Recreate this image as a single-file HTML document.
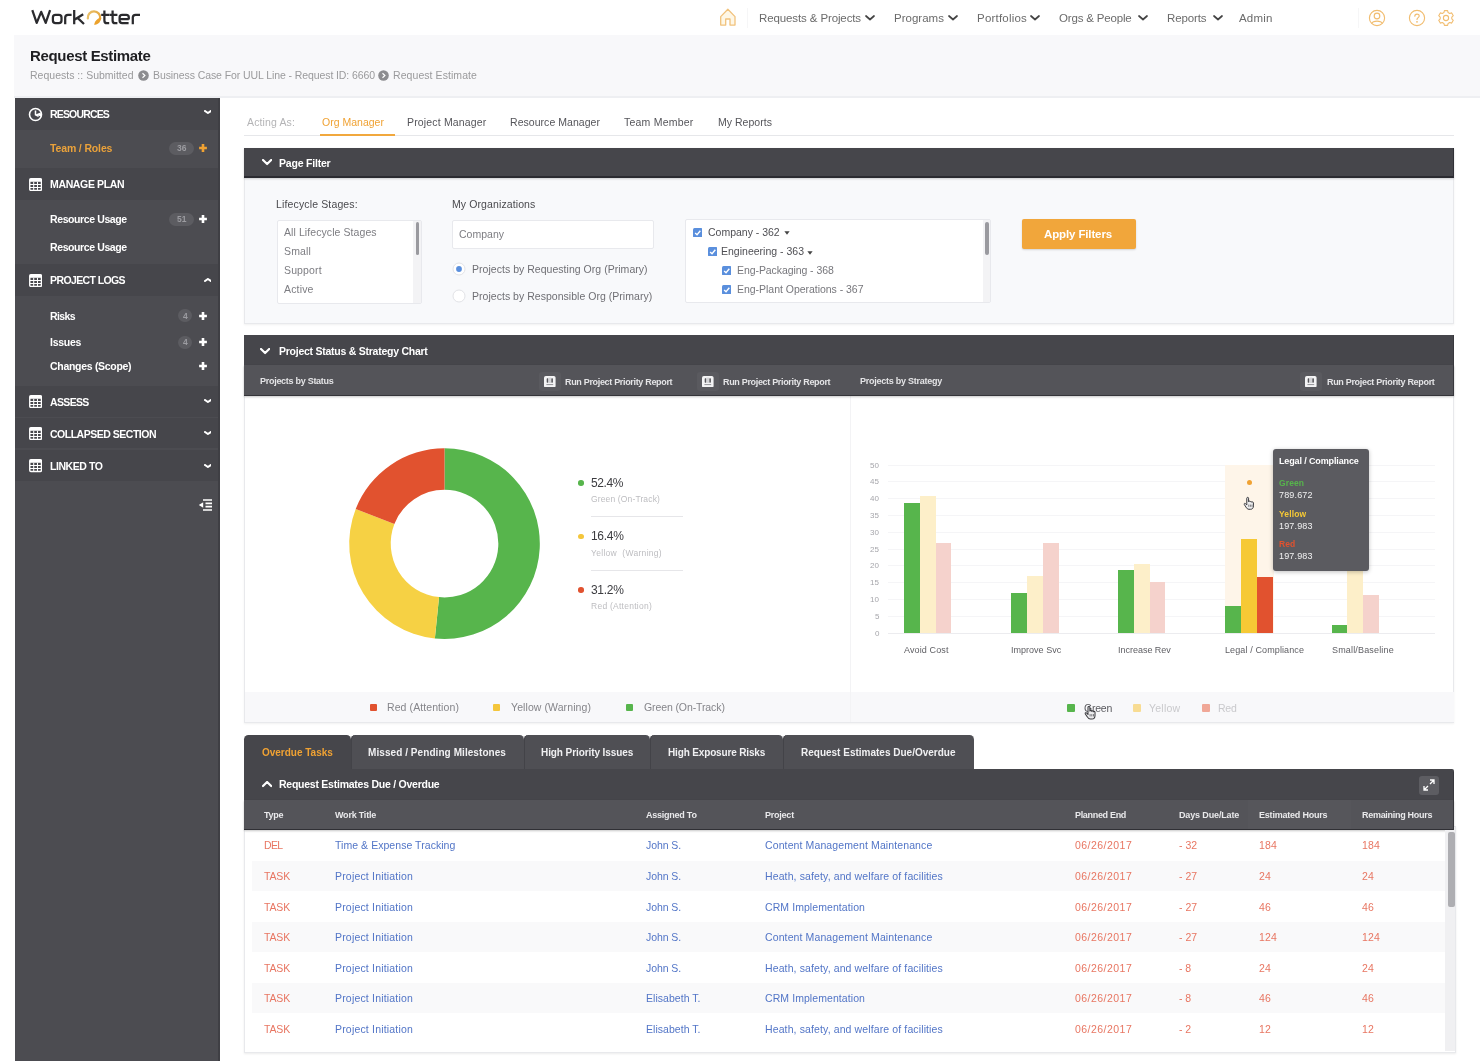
<!DOCTYPE html>
<html><head><meta charset="utf-8"><title>WorkOtter - Request Estimate</title>
<style>
html,body{margin:0;padding:0;background:#fff;}
body{width:1480px;height:1062px;overflow:hidden;position:relative;font-family:"Liberation Sans", sans-serif;}
#pg{position:absolute;left:0;top:0;width:1480px;height:1062px;overflow:hidden;background:#fff;}
#pg div,#pg span,#pg svg{position:absolute;}
#pg span{white-space:pre;line-height:16px;height:16px;-webkit-font-smoothing:antialiased;will-change:transform;}
</style></head><body><div id="pg">
<div style="left:14px;top:35px;width:1466px;height:62px;background:#f8f8fa;"></div>
<div style="left:14px;top:96.4px;width:1466px;height:1.2px;background:#eeeff2;"></div>
<span style="left:759px;top:10.0px;font-size:11.5px;color:#6b6b6b;letter-spacing:-0.115px;">Requests &amp; Projects</span>
<svg style="left:864.5px;top:15.3px" width="10" height="6.5" viewBox="0 0 10 6.5"><path d="M1,1 L5.0,4.5 L9,1" fill="none" stroke="#444" stroke-width="1.7" stroke-linecap="round" stroke-linejoin="round"/></svg>
<span style="left:894px;top:10.0px;font-size:11.5px;color:#6b6b6b;letter-spacing:0.018px;">Programs</span>
<svg style="left:947.5px;top:15.3px" width="10" height="6.5" viewBox="0 0 10 6.5"><path d="M1,1 L5.0,4.5 L9,1" fill="none" stroke="#444" stroke-width="1.7" stroke-linecap="round" stroke-linejoin="round"/></svg>
<span style="left:976.5px;top:10.0px;font-size:11.5px;color:#6b6b6b;letter-spacing:0.206px;">Portfolios</span>
<svg style="left:1030.0px;top:15.3px" width="10" height="6.5" viewBox="0 0 10 6.5"><path d="M1,1 L5.0,4.5 L9,1" fill="none" stroke="#444" stroke-width="1.7" stroke-linecap="round" stroke-linejoin="round"/></svg>
<span style="left:1059px;top:10.0px;font-size:11.5px;color:#6b6b6b;letter-spacing:-0.177px;">Orgs &amp; People</span>
<svg style="left:1137.5px;top:15.3px" width="10" height="6.5" viewBox="0 0 10 6.5"><path d="M1,1 L5.0,4.5 L9,1" fill="none" stroke="#444" stroke-width="1.7" stroke-linecap="round" stroke-linejoin="round"/></svg>
<span style="left:1167px;top:10.0px;font-size:11.5px;color:#6b6b6b;letter-spacing:-0.112px;">Reports</span>
<svg style="left:1212.5px;top:15.3px" width="10" height="6.5" viewBox="0 0 10 6.5"><path d="M1,1 L5.0,4.5 L9,1" fill="none" stroke="#444" stroke-width="1.7" stroke-linecap="round" stroke-linejoin="round"/></svg>
<span style="left:1238.5px;top:10.0px;font-size:11.5px;color:#6b6b6b;letter-spacing:0.178px;">Admin</span>
<div style="left:747px;top:8px;width:1px;height:20px;background:#f6f6f7;"></div>
<div style="left:1358px;top:8px;width:1px;height:20px;background:#f6f6f7;"></div>
<svg style="left:718px;top:8px" width="20" height="19" viewBox="0 0 20 19"><path d="M2.7,8.6 L9.85,1.3 L17,8.6 V17.1 H12 V11 H7.7 V17.1 H2.7 Z" fill="#fef7e6" stroke="#f1c27c" stroke-width="1.3" stroke-linejoin="round"/></svg>
<svg style="left:1368px;top:9px" width="18" height="18" viewBox="0 0 18 18"><circle cx="9" cy="9" r="7.6" fill="none" stroke="#f1bd70" stroke-width="1.15"/><circle cx="9" cy="7" r="2.8" fill="none" stroke="#f1bd70" stroke-width="1.15"/><path d="M3.8,14.3 C5,11.3 13,11.3 14.2,14.3" fill="none" stroke="#f1bd70" stroke-width="1.15"/></svg>
<svg style="left:1407.5px;top:9px" width="18" height="18" viewBox="0 0 18 18"><circle cx="9" cy="9" r="7.6" fill="none" stroke="#f1bd70" stroke-width="1.15"/><path d="M6.8,7.2 C6.8,4.4 11.2,4.4 11.2,7 C11.2,8.6 9,8.6 9,10.4" fill="none" stroke="#f1bd70" stroke-width="1.15" stroke-linecap="round"/><circle cx="9" cy="12.8" r="0.9" fill="#f1bd70"/></svg>
<svg style="left:1436.5px;top:9px" width="18" height="18" viewBox="0 0 18 18"><path d="M7.4,1.6 h3.2 l0.5,2 l1.6,0.9 l2,-0.6 l1.6,2.8 l-1.5,1.4 v1.8 l1.5,1.4 l-1.6,2.8 l-2,-0.6 l-1.6,0.9 l-0.5,2 h-3.2 l-0.5,-2 l-1.6,-0.9 l-2,0.6 l-1.6,-2.8 l1.5,-1.4 v-1.8 l-1.5,-1.4 l1.6,-2.8 l2,0.6 l1.6,-0.9 z" fill="none" stroke="#f1bd70" stroke-width="1.1" stroke-linejoin="round"/><circle cx="9" cy="9" r="2.6" fill="none" stroke="#f1bd70" stroke-width="1.1"/></svg>
<svg style="left:0;top:0" width="160" height="34" viewBox="0 0 160 34" fill="none" stroke-linejoin="round">
<g stroke="#2b2b2e" stroke-width="2.25" stroke-linecap="butt">
<path d="M32.3,10.2 L36.7,22.9 L41.2,11.8 L45.7,22.9 L50.1,10.2" stroke-linejoin="round"/>
<rect x="52.9" y="14.9" width="8.6" height="8.3" rx="2.6"/>
<path d="M65.2,24.2 V17.6 Q65.2,14.9 68,14.9 H71.6"/>
<path d="M74.2,10 V24.2 M74.4,19.8 L83.2,14.2 M77.6,17.9 L84,24"/>
<path d="M104.4,10.4 V20.4 Q104.4,23.2 107,23.2 H109.2 M101.2,14.9 H109.2"/>
<path d="M112.6,10.4 V20.4 Q112.6,23.2 115.2,23.2 H117.4 M109.4,14.9 H117.4"/>
<path d="M128.8,19.1 H119.6 M128.8,19.6 V17.5 Q128.8,14.9 126.2,14.9 H122.2 Q119.6,14.9 119.6,17.5 V20.6 Q119.6,23.2 122.2,23.2 H128.6"/>
<path d="M132.8,24.2 V17.6 Q132.8,14.9 135.6,14.9 H140"/>
</g>
<defs><linearGradient id="lg1" x1="0" y1="0" x2="1" y2="0"><stop offset="0" stop-color="#e9c06a"/><stop offset="1" stop-color="#e6aa45"/></linearGradient></defs>
<path d="M87.85,18.36 A6.2,6.2 0 1 1 100.14,18.46" stroke="url(#lg1)" stroke-width="2.3" stroke-linecap="round"/>
<path d="M101.3,17.7 A7.3,7.3 0 0 1 94.3,24.9 C94.2,22.5 95.6,20.2 98.3,18.5 C99.4,17.8 100.4,17.6 101.3,17.7 Z" fill="#eca22c"/>
</svg>
<span style="left:30px;top:48.0px;font-size:15px;color:#1f1f22;font-weight:700;letter-spacing:-0.336px;">Request Estimate</span>
<span style="left:30px;top:67.0px;font-size:10.5px;color:#9a9a9c;letter-spacing:0.009px;">Requests :: Submitted</span>
<svg style="left:138px;top:70px" width="11" height="11" viewBox="0 0 11 11"><circle cx="5.5" cy="5.5" r="5.3" fill="#8d8d90"/><path d="M4.5,3.2 L6.9,5.5 L4.5,7.8" fill="none" stroke="#fff" stroke-width="1.2"/></svg>
<span style="left:152.5px;top:67.0px;font-size:10.5px;color:#9a9a9c;letter-spacing:-0.090px;">Business Case For UUL Line - Request ID: 6660</span>
<svg style="left:378px;top:70px" width="11" height="11" viewBox="0 0 11 11"><circle cx="5.5" cy="5.5" r="5.3" fill="#8d8d90"/><path d="M4.5,3.2 L6.9,5.5 L4.5,7.8" fill="none" stroke="#fff" stroke-width="1.2"/></svg>
<span style="left:393px;top:67.0px;font-size:10.5px;color:#9a9a9c;letter-spacing:0.070px;">Request Estimate</span>
<div style="left:14.6px;top:97.5px;width:205.4px;height:963.0px;background:#4c4c51;"></div>
<div style="left:14.6px;top:97.5px;width:205.4px;height:32.4px;background:#46464b;"></div>
<span style="left:49.6px;top:106.0px;font-size:10.5px;color:#ffffff;font-weight:700;letter-spacing:-0.835px;">RESOURCES</span>
<svg style="left:203.7px;top:110.10000000000001px" width="7.8" height="5" viewBox="0 0 7.8 5"><path d="M1,1 L3.9,3 L6.8,1" fill="none" stroke="#fff" stroke-width="2.1" stroke-linecap="round" stroke-linejoin="round"/></svg>
<div style="left:14.6px;top:97.5px;width:205.4px;height:1.5px;background:#46464b;"></div>
<svg style="left:28px;top:107px" width="15" height="15" viewBox="0 0 15 15"><circle cx="7.5" cy="7.5" r="6" fill="none" stroke="#fff" stroke-width="1.6"/><path d="M7.5,3.6 V7.7 L10.6,9.4" fill="none" stroke="#fff" stroke-width="1.5"/><path d="M7.5,7.5 L12.5,5.5 A5.6,5.6 0 0 1 12.8,9.6 Z" fill="#fff"/></svg>
<span style="left:50.4px;top:139.6px;font-size:10.5px;color:#eba23a;font-weight:700;letter-spacing:-0.142px;">Team / Roles</span>
<div style="left:169px;top:141.5px;width:24.8px;height:13.0px;background:#5c5c61;border-radius:7px;"></div>
<span style="left:176.6px;top:140.0px;font-size:8.5px;color:#9c9ca1;font-weight:700;letter-spacing:0.066px;">36</span>
<svg style="left:198.4px;top:143px" width="10" height="10" viewBox="0 0 10 10"><path d="M5,1.1 V8.9 M1.1,5 H8.9" stroke="#f0a233" stroke-width="2.6"/></svg>
<div style="left:14.6px;top:167.6px;width:205.4px;height:32.3px;background:#46464b;"></div>
<svg style="left:28.5px;top:177.55px" width="13.2" height="13.2" viewBox="0 0 14 14"><rect x="0.8" y="0.8" width="12.4" height="12.4" rx="1.2" fill="none" stroke="#fff" stroke-width="1.5"/><rect x="0.8" y="0.8" width="12.4" height="3.2" fill="#fff"/><path d="M1,7 H13 M1,10 H13 M5,4 V13 M9,4 V13" stroke="#fff" stroke-width="1.1"/></svg>
<span style="left:49.6px;top:176.05px;font-size:10.5px;color:#ffffff;font-weight:700;letter-spacing:-0.352px;">MANAGE PLAN</span>
<span style="left:50.4px;top:210.7px;font-size:10.5px;color:#ffffff;font-weight:700;letter-spacing:-0.393px;">Resource Usage</span>
<div style="left:169px;top:212.5px;width:24.8px;height:13.0px;background:#5c5c61;border-radius:7px;"></div>
<span style="left:176.6px;top:211.0px;font-size:8.5px;color:#9c9ca1;font-weight:700;letter-spacing:0.066px;">51</span>
<svg style="left:198.4px;top:214px" width="10" height="10" viewBox="0 0 10 10"><path d="M5,1.1 V8.9 M1.1,5 H8.9" stroke="#fff" stroke-width="2.6"/></svg>
<span style="left:50.4px;top:239.2px;font-size:10.5px;color:#ffffff;font-weight:700;letter-spacing:-0.393px;">Resource Usage</span>
<div style="left:14.6px;top:264.2px;width:205.4px;height:31.8px;background:#46464b;"></div>
<svg style="left:28.5px;top:273.90000000000003px" width="13.2" height="13.2" viewBox="0 0 14 14"><rect x="0.8" y="0.8" width="12.4" height="12.4" rx="1.2" fill="none" stroke="#fff" stroke-width="1.5"/><rect x="0.8" y="0.8" width="12.4" height="3.2" fill="#fff"/><path d="M1,7 H13 M1,10 H13 M5,4 V13 M9,4 V13" stroke="#fff" stroke-width="1.1"/></svg>
<span style="left:49.6px;top:272.4px;font-size:10.5px;color:#ffffff;font-weight:700;letter-spacing:-0.605px;">PROJECT LOGS</span>
<svg style="left:203.7px;top:277.5px" width="7.8" height="5" viewBox="0 0 7.8 5"><path d="M1,3 L3.9,1 L6.8,3" fill="none" stroke="#fff" stroke-width="2.1" stroke-linecap="round" stroke-linejoin="round"/></svg>
<span style="left:50.4px;top:307.8px;font-size:10.5px;color:#ffffff;font-weight:700;letter-spacing:-0.586px;">Risks</span>
<div style="left:178px;top:309.3px;width:14px;height:13.0px;background:#5c5c61;border-radius:7px;"></div>
<span style="left:182.6px;top:307.8px;font-size:8.5px;color:#9c9ca1;font-weight:700;">4</span>
<svg style="left:198.4px;top:310.8px" width="10" height="10" viewBox="0 0 10 10"><path d="M5,1.1 V8.9 M1.1,5 H8.9" stroke="#fff" stroke-width="2.6"/></svg>
<span style="left:50.4px;top:334.3px;font-size:10.5px;color:#ffffff;font-weight:700;letter-spacing:-0.267px;">Issues</span>
<div style="left:178px;top:335.8px;width:14px;height:13.0px;background:#5c5c61;border-radius:7px;"></div>
<span style="left:182.6px;top:334.3px;font-size:8.5px;color:#9c9ca1;font-weight:700;">4</span>
<svg style="left:198.4px;top:337.3px" width="10" height="10" viewBox="0 0 10 10"><path d="M5,1.1 V8.9 M1.1,5 H8.9" stroke="#fff" stroke-width="2.6"/></svg>
<span style="left:50.4px;top:357.6px;font-size:10.5px;color:#ffffff;font-weight:700;letter-spacing:-0.298px;">Changes (Scope)</span>
<svg style="left:198.4px;top:361px" width="10" height="10" viewBox="0 0 10 10"><path d="M5,1.1 V8.9 M1.1,5 H8.9" stroke="#fff" stroke-width="2.6"/></svg>
<div style="left:14.6px;top:386px;width:205.4px;height:30.5px;background:#46464b;"></div>
<svg style="left:28.5px;top:395.05px" width="13.2" height="13.2" viewBox="0 0 14 14"><rect x="0.8" y="0.8" width="12.4" height="12.4" rx="1.2" fill="none" stroke="#fff" stroke-width="1.5"/><rect x="0.8" y="0.8" width="12.4" height="3.2" fill="#fff"/><path d="M1,7 H13 M1,10 H13 M5,4 V13 M9,4 V13" stroke="#fff" stroke-width="1.1"/></svg>
<span style="left:49.6px;top:393.55px;font-size:10.5px;color:#ffffff;font-weight:700;letter-spacing:-0.652px;">ASSESS</span>
<svg style="left:203.7px;top:399.25px" width="7.8" height="5" viewBox="0 0 7.8 5"><path d="M1,1 L3.9,3 L6.8,1" fill="none" stroke="#fff" stroke-width="2.1" stroke-linecap="round" stroke-linejoin="round"/></svg>
<div style="left:14.6px;top:418.3px;width:205.4px;height:30.0px;background:#46464b;"></div>
<svg style="left:28.5px;top:427.1px" width="13.2" height="13.2" viewBox="0 0 14 14"><rect x="0.8" y="0.8" width="12.4" height="12.4" rx="1.2" fill="none" stroke="#fff" stroke-width="1.5"/><rect x="0.8" y="0.8" width="12.4" height="3.2" fill="#fff"/><path d="M1,7 H13 M1,10 H13 M5,4 V13 M9,4 V13" stroke="#fff" stroke-width="1.1"/></svg>
<span style="left:49.6px;top:425.6px;font-size:10.5px;color:#ffffff;font-weight:700;letter-spacing:-0.491px;">COLLAPSED SECTION</span>
<svg style="left:203.7px;top:431.3px" width="7.8" height="5" viewBox="0 0 7.8 5"><path d="M1,1 L3.9,3 L6.8,1" fill="none" stroke="#fff" stroke-width="2.1" stroke-linecap="round" stroke-linejoin="round"/></svg>
<div style="left:14.6px;top:450.3px;width:205.4px;height:30.7px;background:#46464b;"></div>
<svg style="left:28.5px;top:459.45px" width="13.2" height="13.2" viewBox="0 0 14 14"><rect x="0.8" y="0.8" width="12.4" height="12.4" rx="1.2" fill="none" stroke="#fff" stroke-width="1.5"/><rect x="0.8" y="0.8" width="12.4" height="3.2" fill="#fff"/><path d="M1,7 H13 M1,10 H13 M5,4 V13 M9,4 V13" stroke="#fff" stroke-width="1.1"/></svg>
<span style="left:49.6px;top:457.95px;font-size:10.5px;color:#ffffff;font-weight:700;letter-spacing:-0.445px;">LINKED TO</span>
<svg style="left:203.7px;top:463.65px" width="7.8" height="5" viewBox="0 0 7.8 5"><path d="M1,1 L3.9,3 L6.8,1" fill="none" stroke="#fff" stroke-width="2.1" stroke-linecap="round" stroke-linejoin="round"/></svg>
<div style="left:218.2px;top:97.5px;width:1.8px;height:963.0px;background:#3f3f44;"></div>
<svg style="left:198px;top:498px" width="15" height="14" viewBox="0 0 15 14"><path d="M5,2 H14 M7.5,5.3 H14 M7.5,8.6 H14 M5,12 H14" stroke="#fff" stroke-width="1.7"/><path d="M0.8,7 L5.2,4.2 V9.8 Z" fill="#fff"/></svg>
<div style="left:244px;top:135px;width:1210px;height:1px;background:#e6e7ea;"></div>
<span style="left:247px;top:114.0px;font-size:10.5px;color:#b4b4b6;letter-spacing:0.130px;">Acting As:</span>
<span style="left:321.5px;top:114.0px;font-size:10.5px;color:#f0a233;letter-spacing:0.011px;">Org Manager</span>
<div style="left:320px;top:133.5px;width:75px;height:2.3px;background:#f1a83e;"></div>
<span style="left:407px;top:114.0px;font-size:10.5px;color:#55555a;letter-spacing:0.164px;">Project Manager</span>
<span style="left:509.5px;top:114.0px;font-size:10.5px;color:#55555a;letter-spacing:0.044px;">Resource Manager</span>
<span style="left:624px;top:114.0px;font-size:10.5px;color:#55555a;letter-spacing:0.217px;">Team Member</span>
<span style="left:718px;top:114.0px;font-size:10.5px;color:#55555a;letter-spacing:0.031px;">My Reports</span>
<div style="left:244px;top:177px;width:1210px;height:147px;background:#f8f9fb;box-sizing:border-box;border:1px solid #e8e9ec;box-shadow:0 1px 2px rgba(0,0,0,0.06);"></div>
<div style="left:244px;top:147.6px;width:1210px;height:30.2px;background:#46464b;box-shadow:0 1px 2px rgba(0,0,0,0.18);"></div>
<svg style="left:261.8px;top:159.1px" width="10.2" height="7" viewBox="0 0 10.2 7"><path d="M1,1 L5.1,5 L9.2,1" fill="none" stroke="#fff" stroke-width="2.2" stroke-linecap="round" stroke-linejoin="round"/></svg>
<div style="left:244px;top:176.2px;width:1210px;height:1.6px;background:#2b2b31;"></div>
<div style="left:1452.6px;top:147.6px;width:1.4px;height:30.2px;background:#303036;"></div>
<span style="left:278.5px;top:155.0px;font-size:10.5px;color:#ffffff;font-weight:700;letter-spacing:-0.199px;">Page Filter</span>
<span style="left:276px;top:196.0px;font-size:10.5px;color:#4a4a4e;letter-spacing:0.142px;">Lifecycle Stages:</span>
<span style="left:451.6px;top:195.7px;font-size:10.5px;color:#4a4a4e;letter-spacing:0.106px;">My Organizations</span>
<div style="left:277px;top:219.6px;width:144.5px;height:84.0px;background:#fff;box-sizing:border-box;border:1px solid #e8e9ed;border-radius:2px;"></div>
<div style="left:412.5px;top:220.6px;width:8.0px;height:82.0px;background:#f3f3f5;"></div>
<div style="left:415.6px;top:222px;width:3.6px;height:33.4px;background:#9a9a9f;border-radius:2px;"></div>
<span style="left:283.6px;top:224.0px;font-size:10.5px;color:#7d7d82;letter-spacing:0.083px;">All Lifecycle Stages</span>
<span style="left:283.6px;top:243.2px;font-size:10.5px;color:#7d7d82;letter-spacing:0.147px;">Small</span>
<span style="left:283.6px;top:262.4px;font-size:10.5px;color:#7d7d82;letter-spacing:0.131px;">Support</span>
<span style="left:283.6px;top:281.2px;font-size:10.5px;color:#7d7d82;letter-spacing:0.168px;">Active</span>
<div style="left:451.6px;top:219.6px;width:202.8px;height:29.6px;background:#fff;box-sizing:border-box;border:1px solid #e8e9ed;border-radius:2px;"></div>
<span style="left:459.2px;top:226.4px;font-size:10.5px;color:#7d7d82;letter-spacing:0.007px;">Company</span>
<svg style="left:452px;top:261.8px" width="14" height="14" viewBox="0 0 14 14"><circle cx="7" cy="7" r="6" fill="#fff" stroke="#e2e3e7" stroke-width="1"/><circle cx="7" cy="7" r="2.9" fill="#5a8fdd"/></svg>
<svg style="left:452px;top:288.6px" width="14" height="14" viewBox="0 0 14 14"><circle cx="7" cy="7" r="6" fill="#fff" stroke="#e2e3e7" stroke-width="1"/></svg>
<span style="left:472.2px;top:261.0px;font-size:10.5px;color:#6f6f74;letter-spacing:0.031px;">Projects by Requesting Org (Primary)</span>
<span style="left:472.2px;top:287.6px;font-size:10.5px;color:#6f6f74;letter-spacing:0.029px;">Projects by Responsible Org (Primary)</span>
<div style="left:685.4px;top:219.2px;width:305.8px;height:84.1px;background:#fff;box-sizing:border-box;border:1px solid #e8e9ed;border-radius:2px;"></div>
<div style="left:983.4px;top:220.2px;width:6.8px;height:82.1px;background:#f3f3f5;"></div>
<div style="left:985.2px;top:222px;width:4.0px;height:33.4px;background:#9a9a9f;border-radius:2px;"></div>
<svg style="left:693px;top:227.6px" width="9.4" height="9.4" viewBox="0 0 10 10"><rect x="0" y="0" width="10" height="10" rx="1.6" fill="#5a8fdd"/><path d="M2.3,5.2 L4.3,7.2 L7.8,3" fill="none" stroke="#fff" stroke-width="1.5"/></svg>
<span style="left:707.6px;top:224.2px;font-size:10.5px;color:#4f4f54;letter-spacing:-0.007px;">Company - 362</span>
<svg style="left:783.6px;top:231.3px" width="6" height="4" viewBox="0 0 6 4"><path d="M0.4,0.3 H5.6 L3,3.7 Z" fill="#444"/></svg>
<svg style="left:707.6px;top:246.8px" width="9.4" height="9.4" viewBox="0 0 10 10"><rect x="0" y="0" width="10" height="10" rx="1.6" fill="#5a8fdd"/><path d="M2.3,5.2 L4.3,7.2 L7.8,3" fill="none" stroke="#fff" stroke-width="1.5"/></svg>
<span style="left:721px;top:243.4px;font-size:10.5px;color:#4f4f54;letter-spacing:0.006px;">Engineering - 363</span>
<svg style="left:807.4px;top:250.5px" width="6" height="4" viewBox="0 0 6 4"><path d="M0.4,0.3 H5.6 L3,3.7 Z" fill="#444"/></svg>
<svg style="left:721.8px;top:265.79999999999995px" width="9.4" height="9.4" viewBox="0 0 10 10"><rect x="0" y="0" width="10" height="10" rx="1.6" fill="#5a8fdd"/><path d="M2.3,5.2 L4.3,7.2 L7.8,3" fill="none" stroke="#fff" stroke-width="1.5"/></svg>
<span style="left:736.5px;top:262.4px;font-size:10.5px;color:#77777c;letter-spacing:-0.073px;">Eng-Packaging - 368</span>
<svg style="left:721.8px;top:284.79999999999995px" width="9.4" height="9.4" viewBox="0 0 10 10"><rect x="0" y="0" width="10" height="10" rx="1.6" fill="#5a8fdd"/><path d="M2.3,5.2 L4.3,7.2 L7.8,3" fill="none" stroke="#fff" stroke-width="1.5"/></svg>
<span style="left:736.5px;top:281.2px;font-size:10.5px;color:#77777c;letter-spacing:-0.029px;">Eng-Plant Operations - 367</span>
<div style="left:1021.5px;top:219.2px;width:114.0px;height:30.2px;background:#f1a63b;border-radius:2px;box-shadow:0 1px 2px rgba(0,0,0,0.15);"></div>
<span style="left:1044px;top:226.0px;font-size:11.5px;color:#ffffff;font-weight:700;letter-spacing:-0.127px;">Apply Filters</span>
<div style="left:244px;top:365px;width:1210px;height:358px;background:#fff;box-sizing:border-box;border:1px solid #e8e9ec;box-shadow:0 1px 2px rgba(0,0,0,0.06);"></div>
<div style="left:245px;top:692.3px;width:1208.5px;height:29.7px;background:#f8f8fa;"></div>
<div style="left:849.5px;top:396px;width:1.0px;height:326px;background:#f3f3f5;"></div>
<div style="left:244px;top:335.4px;width:1210px;height:30.6px;background:#46464b;"></div>
<div style="left:244px;top:365.2px;width:1210px;height:30.6px;background:#545459;box-shadow:0 1px 2px rgba(0,0,0,0.22);"></div>
<div style="left:244px;top:394.8px;width:1210px;height:1.2px;background:#35353a;"></div>
<div style="left:1452.8px;top:335.4px;width:1.2px;height:60.6px;background:#38383d;"></div>
<svg style="left:260.2px;top:347.8px" width="10.2" height="7" viewBox="0 0 10.2 7"><path d="M1,1 L5.1,5 L9.2,1" fill="none" stroke="#fff" stroke-width="2.2" stroke-linecap="round" stroke-linejoin="round"/></svg>
<span style="left:279.4px;top:343.2px;font-size:10.5px;color:#ffffff;font-weight:700;letter-spacing:-0.251px;">Project Status &amp; Strategy Chart</span>
<span style="left:260px;top:373.0px;font-size:9px;color:#e4e4e6;font-weight:700;letter-spacing:-0.280px;">Projects by Status</span>
<span style="left:860px;top:373.0px;font-size:9px;color:#e4e4e6;font-weight:700;letter-spacing:-0.252px;">Projects by Strategy</span>
<div style="left:539px;top:372.0px;width:21.5px;height:19.0px;background:#5a5a5f;border-radius:3px;"></div>
<svg style="left:544px;top:375.6px" width="11.6" height="11.6" viewBox="0 0 11.6 11.6"><rect x="0" y="0" width="11.6" height="11.6" rx="1.8" fill="#f4f4f5"/><rect x="2.7" y="2.3" width="1.7" height="4.4" rx="0.6" fill="#55555a"/><rect x="7.2" y="2.3" width="1.7" height="4.4" rx="0.6" fill="#55555a"/><rect x="4.4" y="1.6" width="2.8" height="5.4" fill="#d4d4d7"/><rect x="2.4" y="8" width="6.8" height="1.1" fill="#9a9a9f"/></svg>
<span style="left:564.7px;top:373.8px;font-size:9px;color:#e4e4e6;font-weight:700;letter-spacing:-0.323px;">Run Project Priority Report</span>
<div style="left:697px;top:372.0px;width:21.5px;height:19.0px;background:#5a5a5f;border-radius:3px;"></div>
<svg style="left:702px;top:375.6px" width="11.6" height="11.6" viewBox="0 0 11.6 11.6"><rect x="0" y="0" width="11.6" height="11.6" rx="1.8" fill="#f4f4f5"/><rect x="2.7" y="2.3" width="1.7" height="4.4" rx="0.6" fill="#55555a"/><rect x="7.2" y="2.3" width="1.7" height="4.4" rx="0.6" fill="#55555a"/><rect x="4.4" y="1.6" width="2.8" height="5.4" fill="#d4d4d7"/><rect x="2.4" y="8" width="6.8" height="1.1" fill="#9a9a9f"/></svg>
<span style="left:722.7px;top:373.8px;font-size:9px;color:#e4e4e6;font-weight:700;letter-spacing:-0.323px;">Run Project Priority Report</span>
<div style="left:1300px;top:372.0px;width:21.5px;height:19.0px;background:#5a5a5f;border-radius:3px;"></div>
<svg style="left:1305px;top:375.6px" width="11.6" height="11.6" viewBox="0 0 11.6 11.6"><rect x="0" y="0" width="11.6" height="11.6" rx="1.8" fill="#f4f4f5"/><rect x="2.7" y="2.3" width="1.7" height="4.4" rx="0.6" fill="#55555a"/><rect x="7.2" y="2.3" width="1.7" height="4.4" rx="0.6" fill="#55555a"/><rect x="4.4" y="1.6" width="2.8" height="5.4" fill="#d4d4d7"/><rect x="2.4" y="8" width="6.8" height="1.1" fill="#9a9a9f"/></svg>
<span style="left:1326.5px;top:373.8px;font-size:9px;color:#e4e4e6;font-weight:700;letter-spacing:-0.315px;">Run Project Priority Report</span>
<svg style="left:0;top:0" width="1480" height="1062" viewBox="0 0 1480 1062"><path d="M444.50,448.30 A95.3,95.3 0 1 1 434.87,638.41 L439.06,597.12 A53.8,53.8 0 1 0 444.50,489.80 Z" fill="#57b54c"/><path d="M434.87,638.41 A95.3,95.3 0 0 1 355.71,508.98 L394.38,524.06 A53.8,53.8 0 0 0 439.06,597.12 Z" fill="#f6d144"/><path d="M355.71,508.98 A95.3,95.3 0 0 1 444.50,448.30 L444.50,489.80 A53.8,53.8 0 0 0 394.38,524.06 Z" fill="#e1522f"/></svg>
<div style="left:578.2px;top:480.2px;width:5.6px;height:5.6px;background:#57b54c;border-radius:50%;"></div>
<span style="left:591px;top:474.8px;font-size:12px;color:#3c3c40;letter-spacing:-0.406px;">52.4%</span>
<span style="left:591px;top:490.8px;font-size:8.5px;color:#bdbdc0;letter-spacing:0.140px;">Green (On-Track)</span>
<div style="left:591px;top:516.4px;width:92px;height:1.0px;background:#e6e6e9;"></div>
<div style="left:578.2px;top:533.6px;width:5.6px;height:5.6px;background:#f4c63c;border-radius:50%;"></div>
<span style="left:591px;top:528.2px;font-size:12px;color:#3c3c40;letter-spacing:-0.306px;">16.4%</span>
<span style="left:591px;top:544.8px;font-size:8.5px;color:#bdbdc0;letter-spacing:0.295px;">Yellow  (Warning)</span>
<div style="left:591px;top:569.6px;width:92px;height:1.0px;background:#e6e6e9;"></div>
<div style="left:578.2px;top:587.2px;width:5.6px;height:5.6px;background:#e1522f;border-radius:50%;"></div>
<span style="left:591px;top:581.8px;font-size:12px;color:#3c3c40;letter-spacing:-0.306px;">31.2%</span>
<span style="left:591px;top:598.0px;font-size:8.5px;color:#bdbdc0;letter-spacing:0.255px;">Red (Attention)</span>
<div style="left:370px;top:704.3px;width:6.8px;height:6.8px;background:#e1522f;border-radius:1px;"></div>
<span style="left:387px;top:699.2px;font-size:10.5px;color:#85858a;letter-spacing:0.092px;">Red (Attention)</span>
<div style="left:493px;top:704.3px;width:6.8px;height:6.8px;background:#f4c63c;border-radius:1px;"></div>
<span style="left:511px;top:699.2px;font-size:10.5px;color:#85858a;letter-spacing:0.088px;">Yellow (Warning)</span>
<div style="left:626px;top:704.3px;width:6.8px;height:6.8px;background:#57b54c;border-radius:1px;"></div>
<span style="left:644px;top:699.2px;font-size:10.5px;color:#85858a;letter-spacing:-0.104px;">Green (On-Track)</span>
<div style="left:887.6px;top:632.5px;width:547.0px;height:1.0px;background:#ececef;"></div>
<span style="left:874.6px;top:625.5px;font-size:8px;color:#a6a6ab;">0</span>
<div style="left:887.6px;top:615.7px;width:547.0px;height:1.0px;background:#f5f5f7;"></div>
<span style="left:874.6px;top:608.7px;font-size:8px;color:#a6a6ab;">5</span>
<div style="left:887.6px;top:598.9px;width:547.0px;height:1.0px;background:#f5f5f7;"></div>
<span style="left:870.0px;top:591.9px;font-size:8px;color:#a6a6ab;letter-spacing:0.147px;">10</span>
<div style="left:887.6px;top:582.1px;width:547.0px;height:1.0px;background:#f5f5f7;"></div>
<span style="left:870.0px;top:575.1px;font-size:8px;color:#a6a6ab;letter-spacing:0.147px;">15</span>
<div style="left:887.6px;top:565.3px;width:547.0px;height:1.0px;background:#f5f5f7;"></div>
<span style="left:870.0px;top:558.3px;font-size:8px;color:#a6a6ab;letter-spacing:0.147px;">20</span>
<div style="left:887.6px;top:548.5px;width:547.0px;height:1.0px;background:#f5f5f7;"></div>
<span style="left:870.0px;top:541.5px;font-size:8px;color:#a6a6ab;letter-spacing:0.147px;">25</span>
<div style="left:887.6px;top:531.7px;width:547.0px;height:1.0px;background:#f5f5f7;"></div>
<span style="left:870.0px;top:524.7px;font-size:8px;color:#a6a6ab;letter-spacing:0.147px;">30</span>
<div style="left:887.6px;top:514.9px;width:547.0px;height:1.0px;background:#f5f5f7;"></div>
<span style="left:870.0px;top:507.9px;font-size:8px;color:#a6a6ab;letter-spacing:0.147px;">35</span>
<div style="left:887.6px;top:498.1px;width:547.0px;height:1.0px;background:#f5f5f7;"></div>
<span style="left:870.0px;top:491.1px;font-size:8px;color:#a6a6ab;letter-spacing:0.147px;">40</span>
<div style="left:887.6px;top:481.3px;width:547.0px;height:1.0px;background:#f5f5f7;"></div>
<span style="left:870.0px;top:474.3px;font-size:8px;color:#a6a6ab;letter-spacing:0.147px;">45</span>
<div style="left:887.6px;top:464.5px;width:547.0px;height:1.0px;background:#f5f5f7;"></div>
<span style="left:870.0px;top:457.5px;font-size:8px;color:#a6a6ab;letter-spacing:0.147px;">50</span>
<div style="left:1225px;top:465px;width:48.7px;height:168px;background:#fef5e9;"></div>
<div style="left:904px;top:502.632px;width:15.7px;height:130.37px;background:#57b54c;"></div>
<div style="left:919.7px;top:496.248px;width:15.9px;height:136.75px;background:#fdefc9;"></div>
<div style="left:935.6px;top:543.288px;width:15.6px;height:89.71px;background:#f5d2cc;"></div>
<div style="left:1011.2px;top:593.352px;width:15.6px;height:39.65px;background:#57b54c;"></div>
<div style="left:1026.8px;top:575.88px;width:16.0px;height:57.12px;background:#fdefc9;"></div>
<div style="left:1042.8px;top:543.288px;width:16.0px;height:89.71px;background:#f5d2cc;"></div>
<div style="left:1117.6px;top:569.832px;width:16.0px;height:63.17px;background:#57b54c;"></div>
<div style="left:1133.6px;top:563.784px;width:16.0px;height:69.22px;background:#fdefc9;"></div>
<div style="left:1149.6px;top:582.264px;width:15.6px;height:50.74px;background:#f5d2cc;"></div>
<div style="left:1225.3px;top:605.784px;width:16.0px;height:27.22px;background:#57b54c;"></div>
<div style="left:1241.3px;top:538.92px;width:16.0px;height:94.08px;background:#f6c935;"></div>
<div style="left:1257.3px;top:577.224px;width:15.3px;height:55.78px;background:#e1522f;"></div>
<div style="left:1331.7px;top:624.936px;width:15.5px;height:8.06px;background:#57b54c;"></div>
<div style="left:1347.2px;top:532.2px;width:16.0px;height:100.8px;background:#fdefc9;"></div>
<div style="left:1363.2px;top:595.032px;width:16.0px;height:37.97px;background:#f5d2cc;"></div>
<span style="left:903.6px;top:642.0px;font-size:9px;color:#606065;letter-spacing:0.124px;">Avoid Cost</span>
<span style="left:1011.2px;top:642.0px;font-size:9px;color:#606065;letter-spacing:0.017px;">Improve Svc</span>
<span style="left:1117.6px;top:642.0px;font-size:9px;color:#606065;letter-spacing:-0.019px;">Increase Rev</span>
<span style="left:1225.3px;top:642.0px;font-size:9px;color:#606065;letter-spacing:0.114px;">Legal / Compliance</span>
<span style="left:1331.7px;top:642.0px;font-size:9px;color:#606065;letter-spacing:0.162px;">Small/Baseline</span>
<div style="left:1246.5px;top:479.9px;width:5.0px;height:5.0px;background:#f0a233;border-radius:50%;"></div>
<div style="left:1273.3px;top:448.6px;width:96.0px;height:122.4px;background:#5b5b60;border-radius:3px;box-shadow:0 1px 4px rgba(0,0,0,0.25);"></div>
<span style="left:1279.3px;top:452.8px;font-size:9px;color:#ffffff;font-weight:700;letter-spacing:-0.130px;">Legal / Compliance</span>
<span style="left:1279.3px;top:475.0px;font-size:8.5px;color:#57b54c;font-weight:700;letter-spacing:0.104px;">Green</span>
<span style="left:1279.3px;top:487.2px;font-size:9px;color:#f1f1f2;letter-spacing:0.165px;">789.672</span>
<span style="left:1279.3px;top:505.6px;font-size:8.5px;color:#f6c935;font-weight:700;letter-spacing:0.139px;">Yellow</span>
<span style="left:1279.3px;top:518.0px;font-size:9px;color:#f1f1f2;letter-spacing:0.165px;">197.983</span>
<span style="left:1279.3px;top:536.0px;font-size:8.5px;color:#e1522f;font-weight:700;letter-spacing:0.079px;">Red</span>
<span style="left:1279.3px;top:548.4px;font-size:9px;color:#f1f1f2;letter-spacing:0.165px;">197.983</span>
<div style="left:1067.4px;top:704.2px;width:7.6px;height:7.4px;background:#57b54c;border-radius:1px;"></div>
<span style="left:1083.5px;top:699.6px;font-size:10.5px;color:#5a5a5f;letter-spacing:-0.218px;">Green</span>
<div style="left:1133.2px;top:704.2px;width:7.6px;height:7.4px;background:#f8dc93;border-radius:1px;"></div>
<span style="left:1148.8px;top:699.6px;font-size:10.5px;color:#c9c9cc;letter-spacing:0.239px;">Yellow</span>
<div style="left:1202px;top:704.2px;width:7.6px;height:7.4px;background:#f0a797;border-radius:1px;"></div>
<span style="left:1218px;top:699.6px;font-size:10.5px;color:#c9c9cc;letter-spacing:-0.222px;">Red</span>
<svg style="left:1242.5px;top:495.5px" width="12.6" height="14.4" viewBox="0 0 14 16"><path d="M4.2,8.6 V2.4 C4.2,1.2 6.2,1.2 6.2,2.4 V6.4 C6.2,5.4 8,5.4 8,6.6 C8,5.8 9.8,5.8 9.8,7 C9.8,6.3 11.6,6.4 11.6,7.6 V11 C11.6,13.4 10.4,14.8 8.4,14.8 H6.6 C5,14.8 4.2,13.8 3.2,12.2 L1.4,9.4 C0.8,8.4 2.2,7.6 3,8.6 L4.2,10 Z" fill="#ececee" stroke="#3a3a3e" stroke-width="1.1" stroke-linejoin="round"/><path d="M6.4,9.6 V12 M8.2,9.6 V12 M10,9.6 V12" stroke="#3a3a3e" stroke-width="0.7"/></svg>
<svg style="left:1083.5px;top:705px" width="13.299999999999999" height="15.2" viewBox="0 0 14 16"><path d="M4.2,8.6 V2.4 C4.2,1.2 6.2,1.2 6.2,2.4 V6.4 C6.2,5.4 8,5.4 8,6.6 C8,5.8 9.8,5.8 9.8,7 C9.8,6.3 11.6,6.4 11.6,7.6 V11 C11.6,13.4 10.4,14.8 8.4,14.8 H6.6 C5,14.8 4.2,13.8 3.2,12.2 L1.4,9.4 C0.8,8.4 2.2,7.6 3,8.6 L4.2,10 Z" fill="#ececee" stroke="#3a3a3e" stroke-width="1.1" stroke-linejoin="round"/><path d="M6.4,9.6 V12 M8.2,9.6 V12 M10,9.6 V12" stroke="#3a3a3e" stroke-width="0.7"/></svg>
<div style="left:244px;top:826px;width:1212px;height:226.5px;background:#fff;box-sizing:border-box;border:1px solid #e8e9ec;box-shadow:0 1px 2px rgba(0,0,0,0.08);"></div>
<div style="left:244.3px;top:734.5px;width:106.7px;height:34.5px;background:#46464b;border-radius:4.5px 4.5px 0 0;"></div>
<div style="left:351px;top:734.5px;width:172.8px;height:34.5px;background:#4f4f54;border-radius:4.5px 4.5px 0 0;box-shadow:inset 1px 0 0 #434348;"></div>
<div style="left:523.8px;top:734.5px;width:126.5px;height:34.5px;background:#4f4f54;border-radius:4.5px 4.5px 0 0;box-shadow:inset 1px 0 0 #434348;"></div>
<div style="left:650.3px;top:734.5px;width:133.1px;height:34.5px;background:#4f4f54;border-radius:4.5px 4.5px 0 0;box-shadow:inset 1px 0 0 #434348;"></div>
<div style="left:783.4px;top:734.5px;width:190.6px;height:34.5px;background:#4f4f54;border-radius:4.5px 4.5px 0 0;box-shadow:inset 1px 0 0 #434348;"></div>
<span style="left:262.4px;top:744.8px;font-size:10px;color:#f0a233;font-weight:700;letter-spacing:-0.013px;">Overdue Tasks</span>
<span style="left:368.2px;top:744.8px;font-size:10px;color:#f0f0f2;font-weight:700;letter-spacing:0.069px;">Missed / Pending Milestones</span>
<span style="left:540.8px;top:744.8px;font-size:10px;color:#f0f0f2;font-weight:700;letter-spacing:-0.086px;">High Priority Issues</span>
<span style="left:668.2px;top:744.8px;font-size:10px;color:#f0f0f2;font-weight:700;letter-spacing:-0.149px;">High Exposure Risks</span>
<span style="left:801px;top:744.8px;font-size:10px;color:#f0f0f2;font-weight:700;">Request Estimates Due/Overdue</span>
<div style="left:244px;top:768.6px;width:1210px;height:31.7px;background:#46464b;border-radius:0 2px 0 0;"></div>
<div style="left:244px;top:799.6px;width:1210px;height:30.2px;background:#545459;box-shadow:0 1px 2px rgba(0,0,0,0.22);"></div>
<div style="left:1248px;top:800.3px;width:103px;height:28.5px;background:#56565b;"></div>
<div style="left:244px;top:828.8px;width:1210px;height:1.4px;background:#303035;"></div>
<div style="left:1452.8px;top:772px;width:1.2px;height:58.2px;background:#38383d;"></div>
<svg style="left:261.6px;top:780.6px" width="10.2" height="7" viewBox="0 0 10.2 7"><path d="M1,5 L5.1,1 L9.2,5" fill="none" stroke="#fff" stroke-width="2.2" stroke-linecap="round" stroke-linejoin="round"/></svg>
<span style="left:278.6px;top:776.0px;font-size:10.5px;color:#ffffff;font-weight:700;letter-spacing:-0.247px;">Request Estimates Due / Overdue</span>
<div style="left:1418.6px;top:775.6px;width:20.0px;height:19.0px;background:#5d5d62;border-radius:3px;"></div>
<svg style="left:1422.6px;top:779px" width="12" height="12" viewBox="0 0 12 12"><path d="M7,1 H11 V5 M11,1 L7,5 M5,11 H1 V7 M1,11 L5,7" fill="none" stroke="#fff" stroke-width="1.3"/></svg>
<span style="left:264.4px;top:806.8px;font-size:9px;color:#e9e9eb;font-weight:700;letter-spacing:-0.286px;">Type</span>
<span style="left:335px;top:806.8px;font-size:9px;color:#e9e9eb;font-weight:700;letter-spacing:-0.219px;">Work Title</span>
<span style="left:646px;top:806.8px;font-size:9px;color:#e9e9eb;font-weight:700;letter-spacing:-0.240px;">Assigned To</span>
<span style="left:764.6px;top:806.8px;font-size:9px;color:#e9e9eb;font-weight:700;letter-spacing:-0.231px;">Project</span>
<span style="left:1075.2px;top:806.8px;font-size:9px;color:#e9e9eb;font-weight:700;letter-spacing:-0.320px;">Planned End</span>
<span style="left:1179px;top:806.8px;font-size:9px;color:#e9e9eb;font-weight:700;letter-spacing:-0.141px;">Days Due/Late</span>
<span style="left:1258.6px;top:806.8px;font-size:9px;color:#e9e9eb;font-weight:700;letter-spacing:-0.209px;">Estimated Hours</span>
<span style="left:1361.5px;top:806.8px;font-size:9px;color:#e9e9eb;font-weight:700;letter-spacing:-0.294px;">Remaining Hours</span>
<span style="left:264.4px;top:837.4px;font-size:10.5px;color:#e87662;letter-spacing:-0.612px;">DEL</span>
<span style="left:335px;top:837.4px;font-size:10.5px;color:#5275c7;letter-spacing:0.050px;">Time &amp; Expense Tracking</span>
<span style="left:646px;top:837.4px;font-size:10.5px;color:#5275c7;letter-spacing:-0.087px;">John S.</span>
<span style="left:764.6px;top:837.4px;font-size:10.5px;color:#5275c7;letter-spacing:0.112px;">Content Management Maintenance</span>
<span style="left:1075.2px;top:837.4px;font-size:10.5px;color:#e87662;letter-spacing:0.464px;">06/26/2017</span>
<span style="left:1179px;top:837.4px;font-size:10.5px;color:#e87662;letter-spacing:0.027px;">- 32</span>
<span style="left:1258.6px;top:837.4px;font-size:10.5px;color:#e87662;letter-spacing:0.206px;">184</span>
<span style="left:1361.5px;top:837.4px;font-size:10.5px;color:#e87662;letter-spacing:0.206px;">184</span>
<div style="left:252px;top:860.98px;width:1193.4px;height:30.0px;background:#f9f9fa;"></div>
<span style="left:264.4px;top:867.98px;font-size:10.5px;color:#e87662;letter-spacing:-0.164px;">TASK</span>
<span style="left:335px;top:867.98px;font-size:10.5px;color:#5275c7;letter-spacing:0.182px;">Project Initiation</span>
<span style="left:646px;top:867.98px;font-size:10.5px;color:#5275c7;letter-spacing:-0.087px;">John S.</span>
<span style="left:764.6px;top:867.98px;font-size:10.5px;color:#5275c7;letter-spacing:0.119px;">Heath, safety, and welfare of facilities</span>
<span style="left:1075.2px;top:867.98px;font-size:10.5px;color:#e87662;letter-spacing:0.464px;">06/26/2017</span>
<span style="left:1179px;top:867.98px;font-size:10.5px;color:#e87662;letter-spacing:0.027px;">- 27</span>
<span style="left:1258.6px;top:867.98px;font-size:10.5px;color:#e87662;letter-spacing:0.206px;">24</span>
<span style="left:1361.5px;top:867.98px;font-size:10.5px;color:#e87662;letter-spacing:0.206px;">24</span>
<span style="left:264.4px;top:898.56px;font-size:10.5px;color:#e87662;letter-spacing:-0.164px;">TASK</span>
<span style="left:335px;top:898.56px;font-size:10.5px;color:#5275c7;letter-spacing:0.182px;">Project Initiation</span>
<span style="left:646px;top:898.56px;font-size:10.5px;color:#5275c7;letter-spacing:-0.087px;">John S.</span>
<span style="left:764.6px;top:898.56px;font-size:10.5px;color:#5275c7;letter-spacing:0.076px;">CRM Implementation</span>
<span style="left:1075.2px;top:898.56px;font-size:10.5px;color:#e87662;letter-spacing:0.464px;">06/26/2017</span>
<span style="left:1179px;top:898.56px;font-size:10.5px;color:#e87662;letter-spacing:0.027px;">- 27</span>
<span style="left:1258.6px;top:898.56px;font-size:10.5px;color:#e87662;letter-spacing:0.206px;">46</span>
<span style="left:1361.5px;top:898.56px;font-size:10.5px;color:#e87662;letter-spacing:0.206px;">46</span>
<div style="left:252px;top:922.14px;width:1193.4px;height:30.0px;background:#f9f9fa;"></div>
<span style="left:264.4px;top:929.14px;font-size:10.5px;color:#e87662;letter-spacing:-0.164px;">TASK</span>
<span style="left:335px;top:929.14px;font-size:10.5px;color:#5275c7;letter-spacing:0.182px;">Project Initiation</span>
<span style="left:646px;top:929.14px;font-size:10.5px;color:#5275c7;letter-spacing:-0.087px;">John S.</span>
<span style="left:764.6px;top:929.14px;font-size:10.5px;color:#5275c7;letter-spacing:0.112px;">Content Management Maintenance</span>
<span style="left:1075.2px;top:929.14px;font-size:10.5px;color:#e87662;letter-spacing:0.464px;">06/26/2017</span>
<span style="left:1179px;top:929.14px;font-size:10.5px;color:#e87662;letter-spacing:0.027px;">- 27</span>
<span style="left:1258.6px;top:929.14px;font-size:10.5px;color:#e87662;letter-spacing:0.206px;">124</span>
<span style="left:1361.5px;top:929.14px;font-size:10.5px;color:#e87662;letter-spacing:0.206px;">124</span>
<span style="left:264.4px;top:959.72px;font-size:10.5px;color:#e87662;letter-spacing:-0.164px;">TASK</span>
<span style="left:335px;top:959.72px;font-size:10.5px;color:#5275c7;letter-spacing:0.182px;">Project Initiation</span>
<span style="left:646px;top:959.72px;font-size:10.5px;color:#5275c7;letter-spacing:-0.087px;">John S.</span>
<span style="left:764.6px;top:959.72px;font-size:10.5px;color:#5275c7;letter-spacing:0.119px;">Heath, safety, and welfare of facilities</span>
<span style="left:1075.2px;top:959.72px;font-size:10.5px;color:#e87662;letter-spacing:0.464px;">06/26/2017</span>
<span style="left:1179px;top:959.72px;font-size:10.5px;color:#e87662;letter-spacing:-0.022px;">- 8</span>
<span style="left:1258.6px;top:959.72px;font-size:10.5px;color:#e87662;letter-spacing:0.206px;">24</span>
<span style="left:1361.5px;top:959.72px;font-size:10.5px;color:#e87662;letter-spacing:0.206px;">24</span>
<div style="left:252px;top:983.3px;width:1193.4px;height:30.0px;background:#f9f9fa;"></div>
<span style="left:264.4px;top:990.3px;font-size:10.5px;color:#e87662;letter-spacing:-0.164px;">TASK</span>
<span style="left:335px;top:990.3px;font-size:10.5px;color:#5275c7;letter-spacing:0.182px;">Project Initiation</span>
<span style="left:646px;top:990.3px;font-size:10.5px;color:#5275c7;letter-spacing:0.034px;">Elisabeth T.</span>
<span style="left:764.6px;top:990.3px;font-size:10.5px;color:#5275c7;letter-spacing:0.076px;">CRM Implementation</span>
<span style="left:1075.2px;top:990.3px;font-size:10.5px;color:#e87662;letter-spacing:0.464px;">06/26/2017</span>
<span style="left:1179px;top:990.3px;font-size:10.5px;color:#e87662;letter-spacing:-0.022px;">- 8</span>
<span style="left:1258.6px;top:990.3px;font-size:10.5px;color:#e87662;letter-spacing:0.206px;">46</span>
<span style="left:1361.5px;top:990.3px;font-size:10.5px;color:#e87662;letter-spacing:0.206px;">46</span>
<span style="left:264.4px;top:1020.88px;font-size:10.5px;color:#e87662;letter-spacing:-0.164px;">TASK</span>
<span style="left:335px;top:1020.88px;font-size:10.5px;color:#5275c7;letter-spacing:0.182px;">Project Initiation</span>
<span style="left:646px;top:1020.88px;font-size:10.5px;color:#5275c7;letter-spacing:0.034px;">Elisabeth T.</span>
<span style="left:764.6px;top:1020.88px;font-size:10.5px;color:#5275c7;letter-spacing:0.119px;">Heath, safety, and welfare of facilities</span>
<span style="left:1075.2px;top:1020.88px;font-size:10.5px;color:#e87662;letter-spacing:0.464px;">06/26/2017</span>
<span style="left:1179px;top:1020.88px;font-size:10.5px;color:#e87662;letter-spacing:-0.022px;">- 2</span>
<span style="left:1258.6px;top:1020.88px;font-size:10.5px;color:#e87662;letter-spacing:0.206px;">12</span>
<span style="left:1361.5px;top:1020.88px;font-size:10.5px;color:#e87662;letter-spacing:0.206px;">12</span>
<div style="left:1445.4px;top:830.3px;width:10.1px;height:221.2px;background:#f0f0f2;"></div>
<div style="left:1448.4px;top:831.6px;width:6.6px;height:75.4px;background:#aeaeb2;border-radius:2px;"></div>
</div></body></html>
